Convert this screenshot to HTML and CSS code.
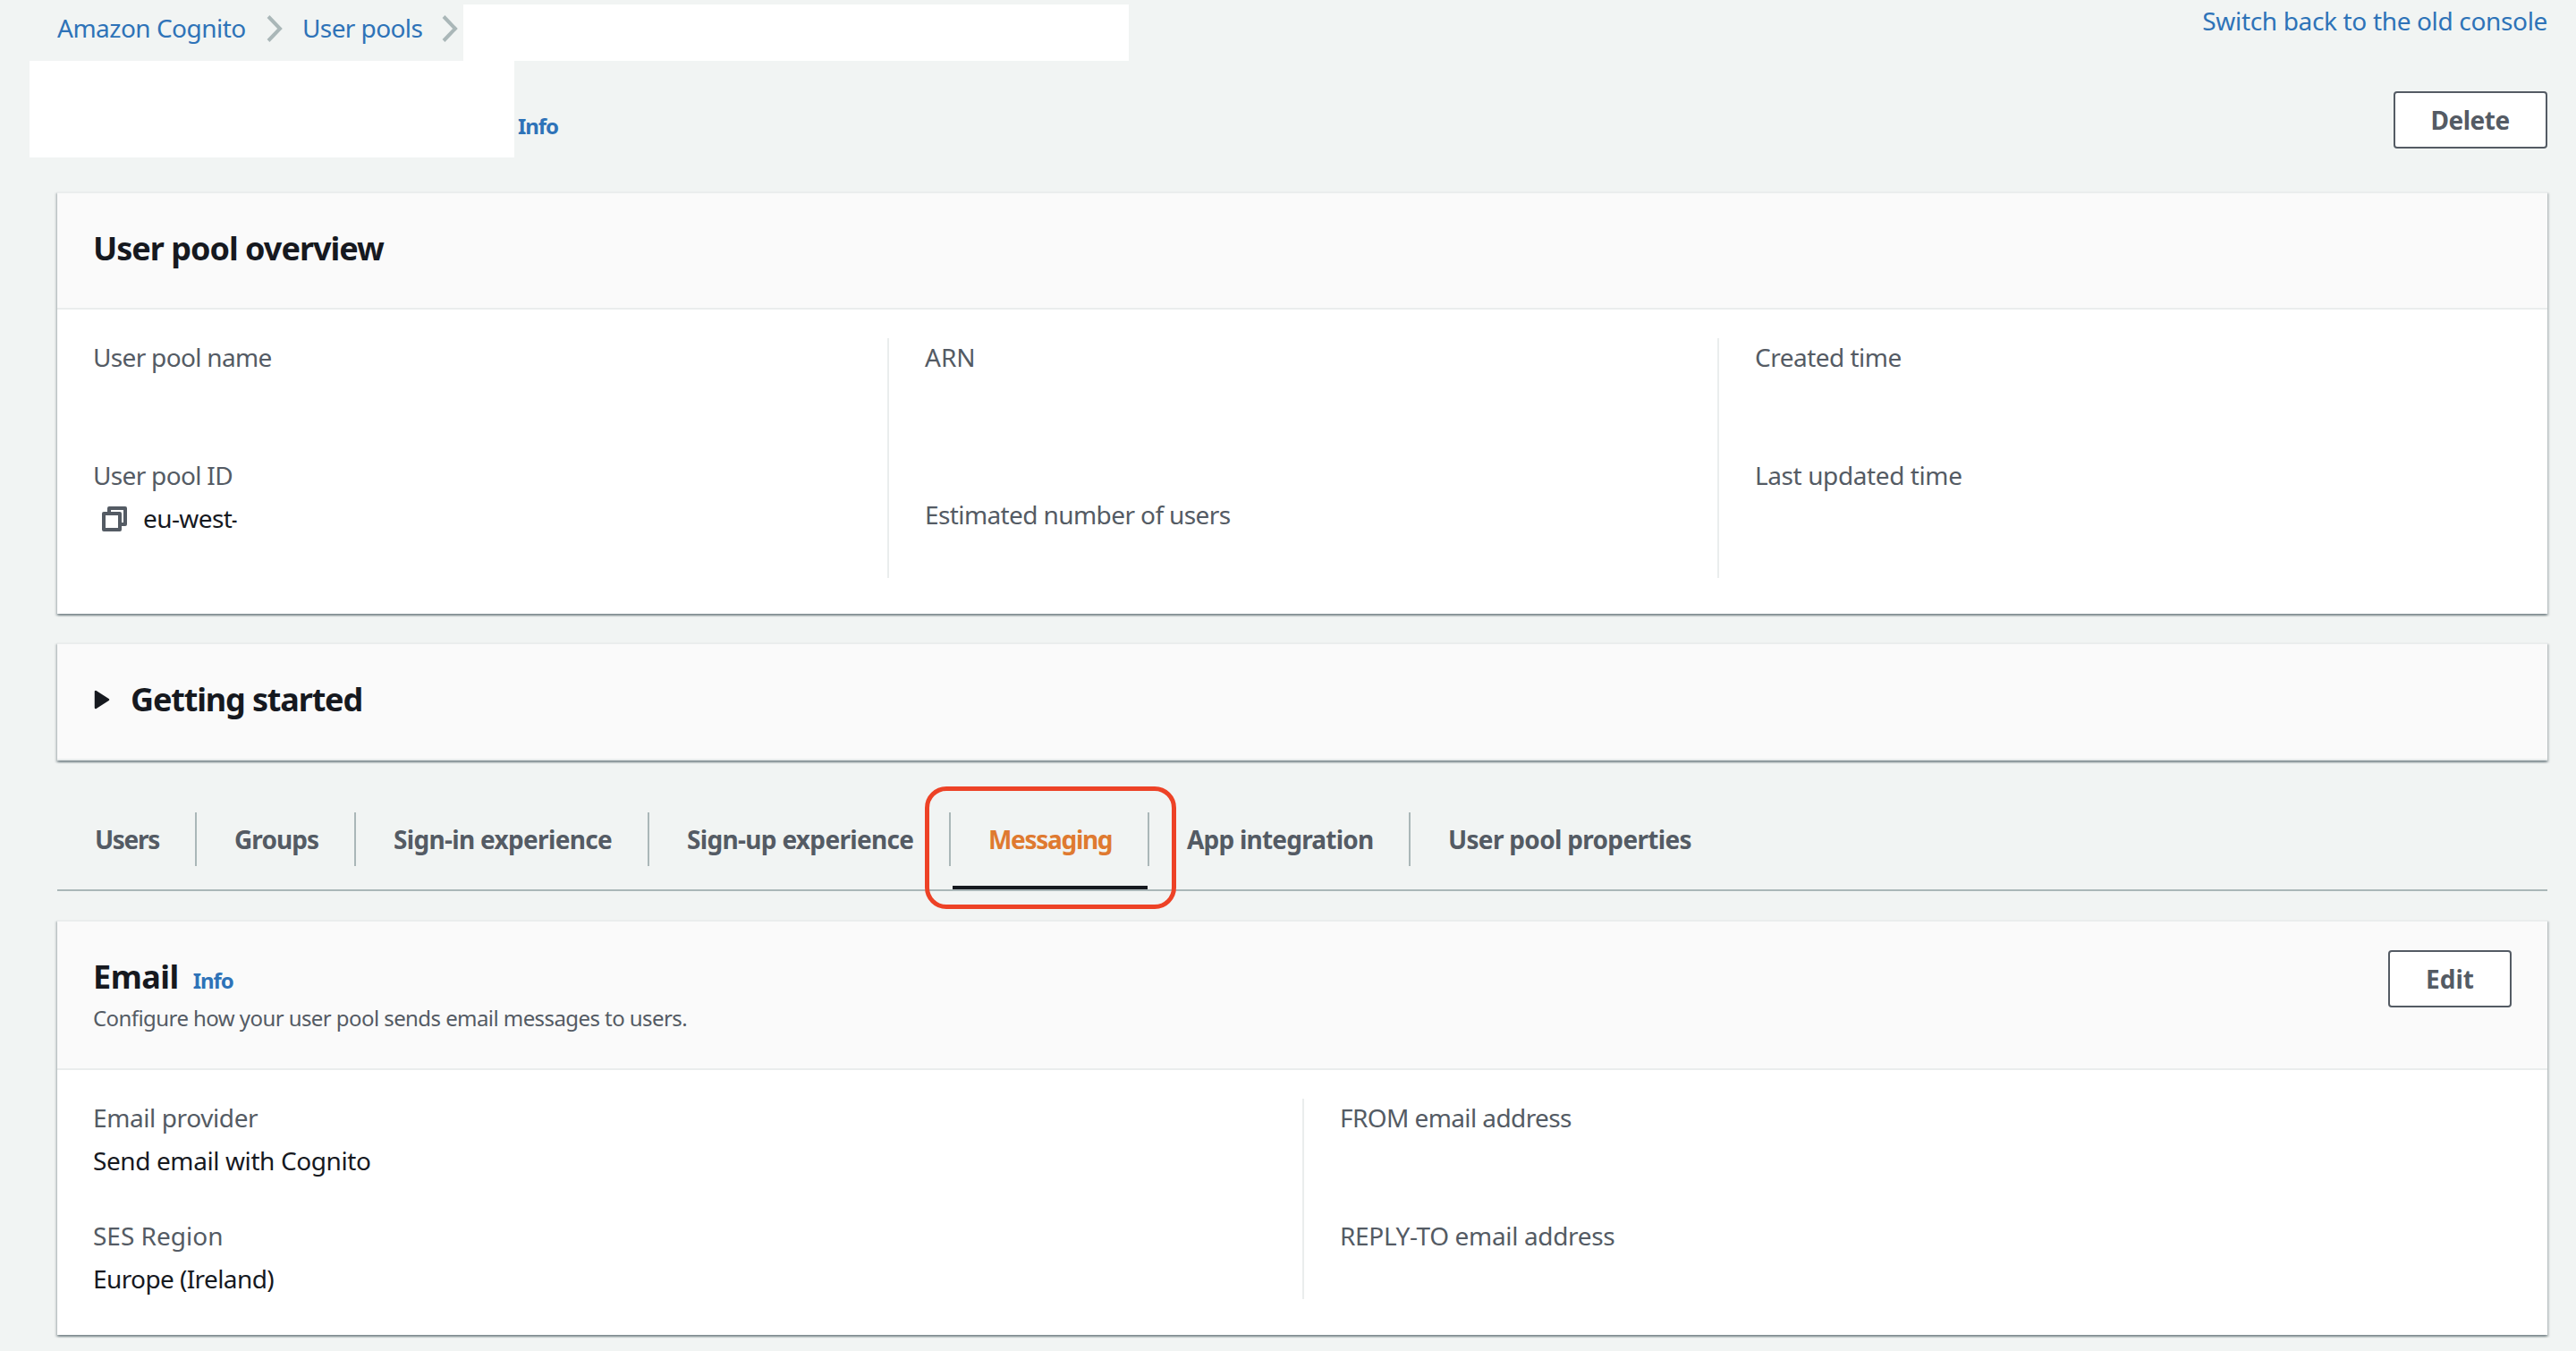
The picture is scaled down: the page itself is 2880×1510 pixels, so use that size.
FILE: index.html
```html
<!DOCTYPE html>
<html lang="en">
<head>
<meta charset="utf-8">
<title>Amazon Cognito - User pools</title>
<link rel="stylesheet" href="styles.css">
</head>
<body>
<div class="page">
  <header class="topbar">
    <nav class="crumbs">
      <a class="link tr-5">Amazon Cognito</a>
      <svg class="chevron" width="24" height="34" viewBox="0 0 24 34"><path d="M6 3.5 19 17 6 30.5"/></svg>
      <a class="link tr-6">User pools</a>
      <svg class="chevron" width="24" height="34" viewBox="0 0 24 34"><path d="M6 3.5 19 17 6 30.5"/></svg>
      <span class="masked-crumb"></span>
    </nav>
    <a class="link switch tr-3">Switch back to the old console</a>
  </header>

  <div class="title-row">
    <span class="masked-title"></span>
    <a class="info">Info</a>
    <button class="btn btn-delete">Delete</button>
  </div>

  <section class="card">
    <div class="card-head"><h2>User pool overview</h2></div>
    <div class="columns three">
      <div class="col">
        <div class="field"><div class="label tr-7">User pool name</div><div class="value"></div></div>
        <div class="field"><div class="label tr-7">User pool ID</div>
          <div class="value copy">
            <svg width="28" height="28" viewBox="0 0 28 28"><path d="M8 6V2h18v18h-4"/><path d="M2 8h18v18H2z"/></svg>
            <span class="pool-id tr-6">eu-west<span class="tail">-</span></span>
          </div>
        </div>
      </div>
      <div class="col">
        <div class="field"><div class="label">ARN</div><div class="value two-line"></div></div>
        <div class="field"><div class="label tr-6">Estimated number of users</div><div class="value"></div></div>
      </div>
      <div class="col">
        <div class="field"><div class="label tr-5">Created time</div><div class="value"></div></div>
        <div class="field"><div class="label tr-4">Last updated time</div><div class="value"></div></div>
      </div>
    </div>
  </section>

  <section class="card">
    <div class="card-head collapsed">
      <svg class="caret" width="18" height="22" viewBox="0 0 18 22"><path d="M2 2v18L16 11z"/></svg>
      <h2 class="getting">Getting started</h2>
    </div>
  </section>

  <nav class="tabs">
    <a class="tab tr-13">Users</a>
    <a class="tab tr-9">Groups</a>
    <a class="tab tr-7">Sign-in experience</a>
    <a class="tab tr-7">Sign-up experience</a>
    <a class="tab active tr-13">Messaging<span class="highlight"></span></a>
    <a class="tab tr-8">App integration</a>
    <a class="tab tr-7">User pool properties</a>
  </nav>

  <section class="card">
    <div class="card-head email-head">
      <div>
        <div class="heading"><h2 class="email">Email</h2><a class="info">Info</a></div>
        <p class="sub">Configure how your user pool sends email messages to users.</p>
      </div>
      <button class="btn btn-edit">Edit</button>
    </div>
    <div class="columns two">
      <div class="col">
        <div class="field"><div class="label tr-4">Email provider</div><div class="value tr-4">Send email with Cognito</div></div>
        <div class="field"><div class="label">SES Region</div><div class="value tr-6">Europe (Ireland)</div></div>
      </div>
      <div class="col">
        <div class="field"><div class="label tr-6">FROM email address</div><div class="value"></div></div>
        <div class="field"><div class="label tr-3">REPLY-TO email address</div><div class="value"></div></div>
      </div>
    </div>
  </section>
</div>
</body>
</html>
```
FILE: styles.css
```css
* { box-sizing: border-box; }
body {
  margin: 0;
  background: #f1f4f3;
  color: #16191f;
  font: 28px/42px "Noto Sans", "Open Sans", sans-serif;
  white-space: nowrap;
}
h2, p { margin: 0; }
.page { padding: 0 32px 0 64px; height: 1510px; overflow: hidden; }

/* letter spacing steps, in tenths of a pixel */
.tr-3 { letter-spacing: -0.34px; }
.tr-4 { letter-spacing: -0.4px; }
.tr-5 { letter-spacing: -0.51px; }
.tr-6 { letter-spacing: -0.6px; }
.tr-7 { letter-spacing: -0.68px; }
.tr-8 { letter-spacing: -0.78px; }
.tr-9 { letter-spacing: -0.92px; }
.tr-13 { letter-spacing: -1.3px; }

.link, .info { color: #2e73b8; }
.info { font-size: 24px; font-weight: 700; line-height: 36px; letter-spacing: -1.1px; }

.topbar { display: flex; justify-content: space-between; height: 68px; }
.crumbs {
  display: grid;
  grid-template-columns: 230px 44px 152px 28px 744px;
  align-items: start;
}
.crumbs .link { margin-top: 10px; }
.chevron { margin-top: 15px; fill: none; stroke: #aab7b8; stroke-width: 4; }
.masked-crumb { margin-top: 5px; height: 63px; background: #fff; }
.switch { margin-top: 2px; }

.title-row { display: flex; align-items: flex-start; height: 146px; }
.masked-title { width: 542px; height: 108px; margin-left: -31px; background: #fff; }
.title-row .info { margin: 55px auto 0 4px; }

.btn {
  height: 64px;
  padding: 0;
  border: 2px solid #545b64;
  border-radius: 4px;
  background: #fff;
  color: #545b64;
  font: 700 28px/60px "Noto Sans", "Open Sans", sans-serif;
  text-align: left;
  display: flex;
}
.btn-delete { width: 172px; margin-top: 34px; padding-left: 39.5px; letter-spacing: -0.48px; }
.btn-edit { width: 138px; margin-top: -5px; padding-left: 40px; }

.card {
  margin-bottom: 32px;
  border-top: 2px solid #eaeded;
  background: #fff;
  box-shadow: 0 2px 2px rgba(0,28,36,.3), 2px 2px 2px rgba(0,28,36,.15), -2px 2px 2px rgba(0,28,36,.15);
}
.card-head {
  height: 130px;
  padding: 37px 40px 0;
  border-bottom: 2px solid #eaeded;
  background: #fafafa;
}
.card-head h2 { font-size: 36px; line-height: 50px; letter-spacing: -1px; }
.collapsed { display: flex; }
.caret { margin: 14px 23px 0 1px; fill: #16191f; stroke: #16191f; stroke-width: 2.5; stroke-linejoin: round; }
.card-head .getting { letter-spacing: -1.15px; }

.columns { display: grid; padding: 32px 0 40px; }
.three { grid-template-columns: repeat(3, 1fr); }
.two { grid-template-columns: repeat(2, 1fr); }
.col { display: flex; flex-direction: column; gap: 40px; padding-left: 40px; }
.col + .col { border-left: 2px solid #eaeded; }
.label { margin-bottom: 6px; color: #545b64; }
.value { height: 44px; }
.two-line { height: 88px; }
.copy { display: flex; align-items: flex-start; }
.copy svg { margin: 8px 18px 0 10px; fill: none; stroke: #545b64; stroke-width: 4; stroke-linejoin: round; }
.tail { font-size: 18px; font-weight: 700; line-height: 1; vertical-align: 2px; }

.tabs {
  display: grid;
  grid-template-columns: 156px 178px 328px 337px 222px 292px 1fr;
  height: 114px;
  margin: 32px 0;
  padding-top: 26px;
  border-bottom: 2px solid #aab7b8;
  align-items: start;
}
.tab {
  position: relative;
  height: 60px;
  padding-left: 42px;
  border-right: 2px solid #aab7b8;
  color: #545b64;
  font-weight: 700;
  line-height: 60px;
}
.tab:last-child { border-right: 0; }
.tab.active { color: #df7a30; }
.tab.active::after {
  content: "";
  position: absolute;
  left: 2px;
  right: 0;
  bottom: -26px;
  height: 4px;
  background: #16191f;
}
.highlight {
  position: absolute;
  left: -29px;
  top: -29px;
  width: 281px;
  height: 137px;
  border: 5px solid #ed4226;
  border-radius: 24px;
}

.email-head { display: flex; justify-content: space-between; height: 166px; }
.heading { display: flex; align-items: baseline; gap: 16px; height: 50px; }
.card-head .email { letter-spacing: -0.5px; }
.sub { margin-top: 5px; color: #545b64; font-size: 24px; line-height: 32px; letter-spacing: -0.57px; }
```
